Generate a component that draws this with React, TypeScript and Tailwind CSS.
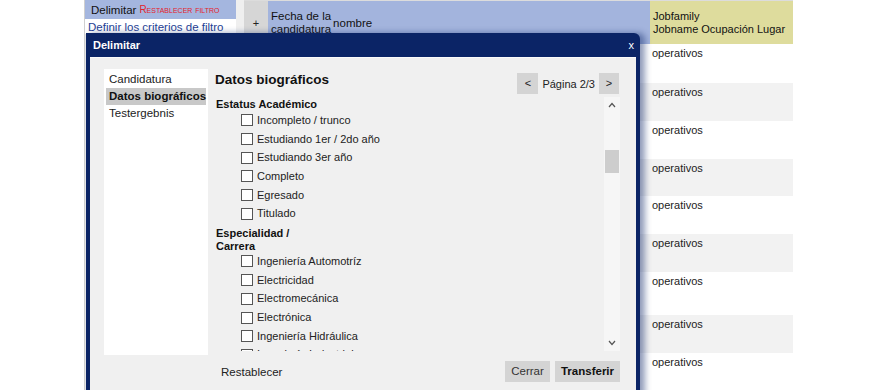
import React from "react";

const rows = [
  { h: 39, bg: "bg-white" },
  { h: 38, bg: "bg-[#f2f2f2]" },
  { h: 38, bg: "bg-white" },
  { h: 37, bg: "bg-[#f2f2f2]" },
  { h: 38, bg: "bg-white" },
  { h: 38, bg: "bg-[#f2f2f2]" },
  { h: 43, bg: "bg-white" },
  { h: 38, bg: "bg-[#f2f2f2]" },
  { h: 37, bg: "bg-white" },
];

const estatus = [
  "Incompleto / trunco",
  "Estudiando 1er / 2do año",
  "Estudiando 3er año",
  "Completo",
  "Egresado",
  "Titulado",
];

const especialidad = [
  "Ingeniería Automotríz",
  "Electricidad",
  "Electromecánica",
  "Electrónica",
  "Ingeniería Hidráulica",
  "Ingeniería Industrial",
];

function CheckRow({ label }: { label: string }) {
  return (
    <div className="flex h-[18.7px] items-center pl-[25px]">
      <span className="block h-[12px] w-[12px] shrink-0 border border-[#555] bg-white" />
      <span className="ml-[4px] whitespace-nowrap text-[11px] leading-[13px] text-[#222]">{label}</span>
    </div>
  );
}

export default function App() {
  return (
    <div className="relative h-[390px] w-[869px] overflow-hidden bg-white font-['Liberation_Sans',Arial,sans-serif] text-[11px] text-[#222]">
      {/* background page */}
      <div className="flex pl-[84px]">
        <div className="flex w-[152px] flex-col border-l border-[#cfcfcf]">
          <div className="flex h-[19px] items-center bg-[#a4b6df] pl-[6px] pt-[1px]">
            <span className="text-[11.5px] leading-[14px] text-[#111]">Delimitar</span>
            <span className="ml-[3px] text-[10px] leading-[12px] text-[#e3222b] [font-variant:small-caps]">Restablecer filtro</span>
          </div>
          <div className="flex h-[15px] items-center bg-white pl-[3px] text-[11.5px] leading-[14px] text-[#1f3f95]">
            Definir los criterios de filtro
          </div>
          <div className="h-[360px] bg-[#e8e8e8]" />
        </div>
        <div className="w-[8px] bg-[#efefef]" />
        <div className="flex w-[549px] flex-col">
          <div className="flex h-[44px] border-t border-[#dcdcdc]">
            <div className="flex w-[24px] items-start justify-center bg-[#d6d6d6] pt-[16px] text-[11px] leading-[13px]">+</div>
            <div className="flex w-[382px] items-start bg-[#a3b4dd] pl-[3px] pt-[9px]">
              <div className="text-[11.5px] leading-[13px] text-[#111]">
                Fecha de la
                <br />
                candidatura
              </div>
              <div className="ml-[2px] pt-[7px] text-[11.5px] leading-[13px] text-[#111]">nombre</div>
            </div>
            <div className="w-[143px] whitespace-nowrap bg-[#dedc9d] pl-[3px] pt-[9px] text-[11px] leading-[13px] text-[#111]">
              Jobfamily
              <br />
              Jobname Ocupación Lugar
            </div>
          </div>
          {rows.map((r, i) => (
            <div key={i} className={`flex ${r.bg}`} style={{ height: r.h }}>
              <div className="w-[406px]" />
              <div className="pl-[2px] pt-[2px] text-[11px] leading-[14px] text-[#222]">operativos</div>
            </div>
          ))}
        </div>
      </div>

      {/* dialog */}
      <div className="absolute left-[86px] top-[33px] flex h-[370px] w-[554px] flex-col rounded-tr-[6px] bg-[#0b2466] px-[4px] pb-[4px] shadow-[5px_0_6px_rgba(11,36,102,0.45)]">
        <div className="flex h-[24px] shrink-0 items-center justify-between pl-[3px] pr-[2px]">
          <span className="text-[11px] font-bold leading-[14px] text-white">Delimitar</span>
          <span className="text-[11px] leading-[14px] text-white">x</span>
        </div>
        <div className="flex flex-1 flex-col border-t border-[#fafafa] bg-[#f0f0f0] pl-[14px] pt-[11px]">
          <div className="flex h-[286px]">
            <div className="flex w-[104px] flex-col bg-white pt-[2px]">
              <div className="mx-[2px] flex h-[17px] items-center whitespace-nowrap px-[3px] text-[11.5px] text-[#222]">Candidatura</div>
              <div className="mx-[2px] flex h-[17px] items-center whitespace-nowrap bg-[#c8c8c8] px-[3px] text-[11.5px] font-bold text-[#111]">
                Datos biográficos
              </div>
              <div className="mx-[2px] flex h-[17px] items-center whitespace-nowrap px-[3px] text-[11.5px] text-[#222]">Testergebnis</div>
            </div>
            <div className="ml-[7px] flex w-[405px] flex-col">
              <div className="flex h-[28px] shrink-0 items-start justify-between pr-[1px]">
                <div className="mt-[1px] text-[13.5px] font-bold leading-[20px] text-[#111]">Datos biográficos</div>
                <div className="mt-[4px] flex items-center">
                  <div className="flex h-[21px] w-[21px] items-center justify-center bg-[#d4d4d4] text-[11px] text-[#222]">&lt;</div>
                  <div className="px-[4px] text-[11px] leading-[14px] text-[#222]">Página 2/3</div>
                  <div className="flex h-[21px] w-[20px] items-center justify-center bg-[#d4d4d4] text-[11px] text-[#222]">&gt;</div>
                </div>
              </div>
              <div className="flex h-[254px] overflow-hidden">
                <div className="flex-1 overflow-hidden pl-[1px] pt-[1px]">
                  <div className="h-[13px] text-[11px] font-bold leading-[13px] text-[#111]">Estatus Académico</div>
                  {estatus.map((l) => (
                    <CheckRow key={l} label={l} />
                  ))}
                  <div className="mt-[4px] w-[80px] text-[11px] font-bold leading-[12.5px] text-[#111]">
                    Especialidad / Carrera
                  </div>
                  {especialidad.map((l) => (
                    <CheckRow key={l} label={l} />
                  ))}
                </div>
                <div className="relative w-[16px] bg-[#f6f6f6]">
                  <svg className="absolute left-[4px] top-[5px]" width="8" height="6" viewBox="0 0 8 6">
                    <path d="M1 5 L4 1.5 L7 5" fill="none" stroke="#555" strokeWidth="1.2" />
                  </svg>
                  <div className="absolute left-[1px] top-[53px] h-[23px] w-[14px] bg-[#cdcdcd]" />
                  <svg className="absolute bottom-[5px] left-[4px]" width="8" height="6" viewBox="0 0 8 6">
                    <path d="M1 1 L4 4.5 L7 1" fill="none" stroke="#555" strokeWidth="1.2" />
                  </svg>
                </div>
              </div>
            </div>
          </div>
          <div className="flex pt-[6px]">
            <div className="w-[111px]" />
            <div className="flex w-[405px] items-center justify-between">
              <span className="ml-[6px] text-[11.5px] leading-[14px] text-[#222]">Restablecer</span>
              <div className="flex gap-[5px]">
                <div className="flex h-[21px] w-[45px] items-center justify-center bg-[#d4d4d4] text-[11.5px] text-[#333]">Cerrar</div>
                <div className="flex h-[21px] w-[65px] items-center justify-center bg-[#d4d4d4] text-[11.5px] font-bold text-[#111]">Transferir</div>
              </div>
            </div>
          </div>
        </div>
      </div>
    </div>
  );
}
